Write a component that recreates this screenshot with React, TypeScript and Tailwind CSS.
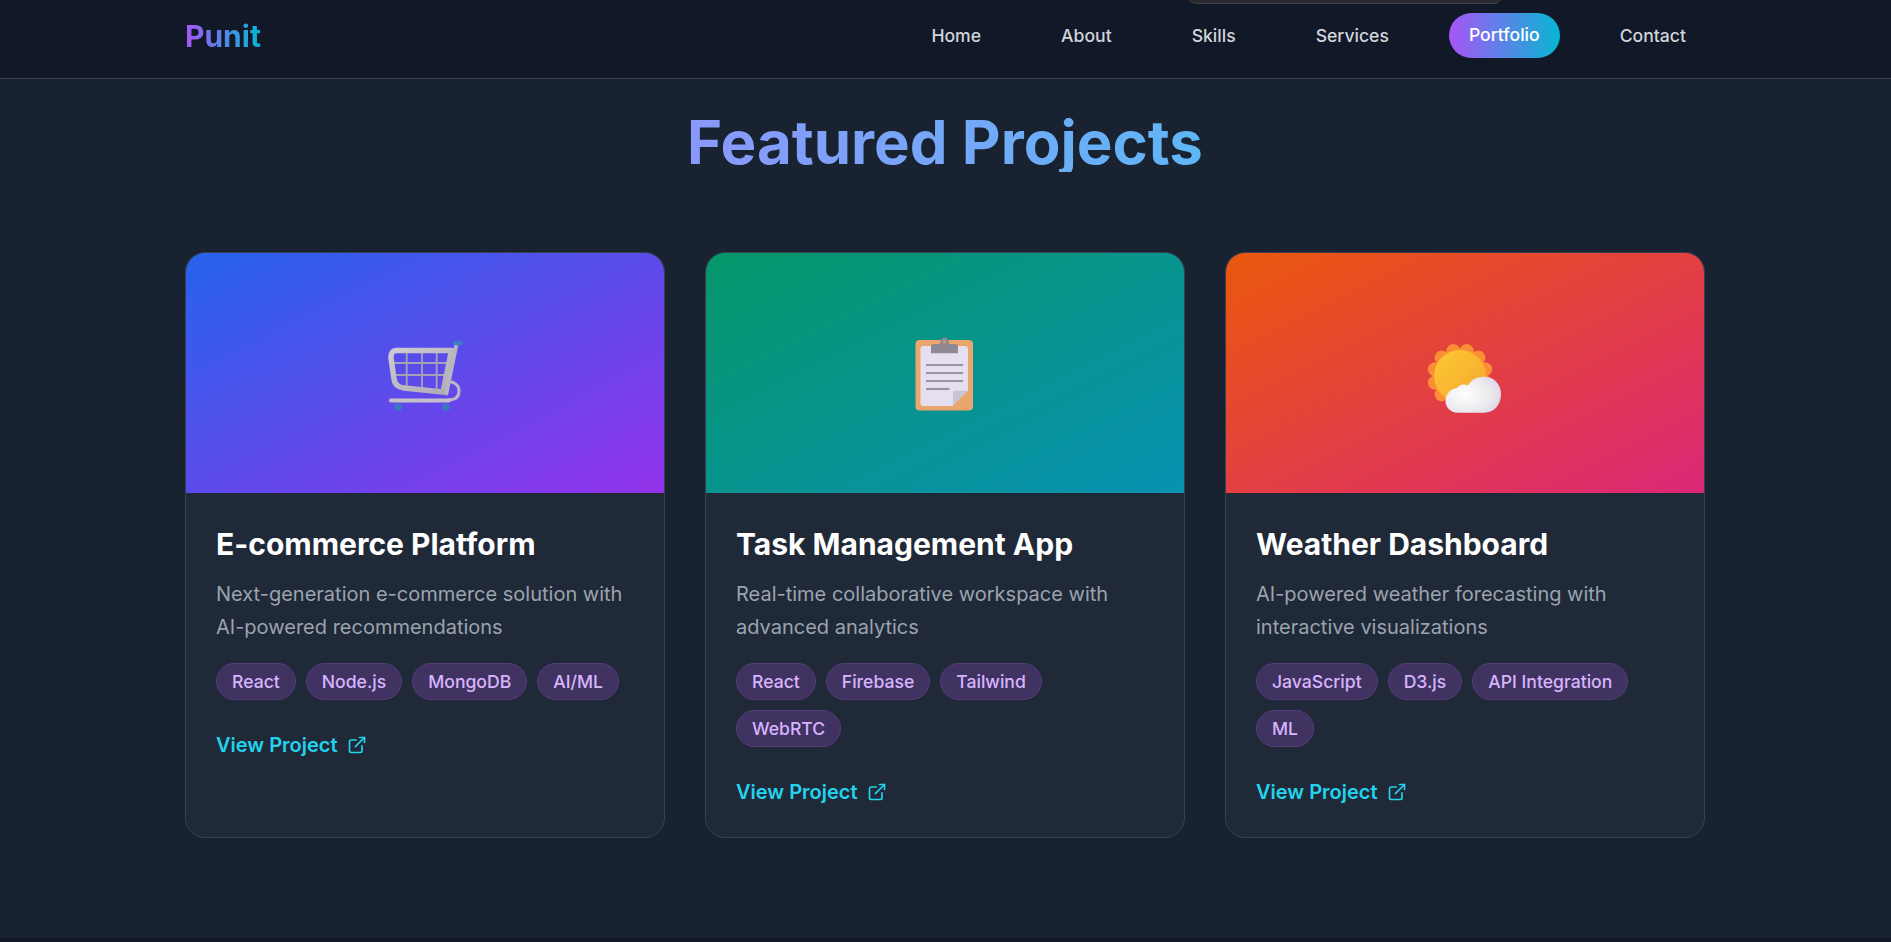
import { ExternalLink } from 'lucide-react';

const NAV_ITEMS = ['Home', 'About', 'Skills', 'Services', 'Portfolio', 'Contact'];

function CartIcon() {
  return (
    <svg viewBox="0 0 80 80" className="w-20 h-20">
      <defs>
        <linearGradient id="cartMetal" x1="0" y1="0" x2="1" y2="1">
          <stop offset="0" stopColor="#cfcbd2" />
          <stop offset="1" stopColor="#aeaab6" />
        </linearGradient>
      </defs>
      <g fill="none" stroke="#a6a3b5" strokeWidth="1.800">
        <path d="M6 30H66" />
        <path d="M7 42H63" />
        <path d="M21.700 15V56" />
        <path d="M37 15V58" />
        <path d="M51.700 15V60" />
      </g>
      <path d="M62 49C69 48 74 52 74 58C74 64 70 67 63 67" fill="none" stroke="#bdb8c2" strokeWidth="3" />
      <path d="M12 17.500H66.500L58 59L19 55Q10 54 9 46L6 25Q5.500 17.500 12 17.500Z" fill="none" stroke="url(#cartMetal)" strokeWidth="5.500" strokeLinejoin="round" />
      <path d="M71.500 11L61 62" fill="none" stroke="#b9b5be" strokeWidth="4" />
      <path d="M6 67.500H64" fill="none" stroke="#c6bfc9" strokeWidth="4" strokeLinecap="round" />
      <ellipse cx="73" cy="10" rx="5" ry="2.500" fill="#3a7fc0" />
      <circle cx="13.300" cy="74.300" r="3.700" fill="#3b78c4" />
      <circle cx="61" cy="74.300" r="3.700" fill="#3b78c4" />
    </svg>
  );
}

function ClipboardIcon() {
  return (
    <svg viewBox="0 0 80 80" className="w-20 h-20">
      <rect x="10.500" y="7" width="57.500" height="70.500" rx="4" fill="#eaa66c" />
      <path d="M18.500 13H60Q63 13 63 16V57.700L48 73H18.500Q15.500 73 15.500 70V16Q15.500 13 18.500 13Z" fill="#e5dfef" />
      <path d="M29 11H35Q35.500 4.300 39.500 4.300Q43.500 4.300 44 11H50Q53 11 53 14V20.300H26V14Q26 11 29 11Z" fill="#8e8892" />
      <circle cx="39.500" cy="9" r="1.700" fill="#c69e84" />
      <g stroke="#97939f" strokeWidth="2.200">
        <path d="M21 32H58" />
        <path d="M21 40H58" />
        <path d="M21 48H58" />
        <path d="M21 56H44.500" />
      </g>
      <path d="M48 73V60.700Q48 57.700 51 57.700H63Z" fill="#cac5d3" />
      <path d="M48 73L63 57.700V73Z" fill="#eaa66c" />
    </svg>
  );
}

const SUN_PETALS = Array.from({ length: 12 }, (_, i) => i * 30);

function WeatherIcon() {
  return (
    <svg viewBox="0 0 80 80" className="w-20 h-20">
      <defs>
        <radialGradient id="cloudShade" cx="0.35" cy="0.5" r="0.75">
          <stop offset="0" stopColor="#ffffff" />
          <stop offset="0.65" stopColor="#eae8ec" />
          <stop offset="1" stopColor="#d6d2e8" />
        </radialGradient>
        <linearGradient id="sunFill" x1="0" y1="0" x2="1" y2="1">
          <stop offset="0" stopColor="#fdca35" />
          <stop offset="1" stopColor="#f3a62b" />
        </linearGradient>
      </defs>
      <g fill="#f98e35">
        <circle cx="35" cy="43" r="28" />
        {SUN_PETALS.map((deg) => (
          <circle
            key={deg}
            cx={35 + 26 * Math.cos(((deg + 15) * Math.PI) / 180)}
            cy={43 + 26 * Math.sin(((deg + 15) * Math.PI) / 180)}
            r="7"
          />
        ))}
      </g>
      <circle cx="35" cy="43" r="26" fill="url(#sunFill)" />
      <path d="M33 79.700C25 79.700 20.500 74 20.500 68C20.500 61 26 55.500 32 55C34 51.500 39 50.500 43 52.500C46 46.500 52 43.700 59 43.700C69 43.700 76 51 76 61C76 72 69 79.700 59 79.700Z" fill="url(#cloudShade)" />
    </svg>
  );
}

const PROJECTS = [
  {
    title: 'E-commerce Platform',
    lines: 'Next-generation e-commerce solution with AI-powered recommendations',
    tags: ['React', 'Node.js', 'MongoDB', 'AI/ML'],
    banner: 'bg-[linear-gradient(to_bottom_right,#2563eb,#9333ea)]',
    icon: <CartIcon />,
  },
  {
    title: 'Task Management App',
    lines: 'Real-time collaborative workspace with advanced analytics',
    tags: ['React', 'Firebase', 'Tailwind', 'WebRTC'],
    banner: 'bg-[linear-gradient(to_bottom_right,#059669,#0891b2)]',
    icon: <ClipboardIcon />,
  },
  {
    title: 'Weather Dashboard',
    lines: 'AI-powered weather forecasting with interactive visualizations',
    tags: ['JavaScript', 'D3.js', 'API Integration', 'ML'],
    banner: 'bg-[linear-gradient(to_bottom_right,#ea580c,#db2777)]',
    icon: <WeatherIcon />,
  },
];

export default function App() {
  return (
    <div className="relative h-[942px] overflow-hidden bg-[#182230] font-['Inter',sans-serif]">
      {/* Nav */}
      <header className="h-[79px] pb-[6px] border-b border-[#374151] bg-[#111827]">
        <div className="w-[1521px] ml-[185px] h-full flex items-center justify-between">
          <span className="text-[30px] font-bold bg-[linear-gradient(90deg,#a855f7,#06b6d4)] bg-clip-text text-transparent">Punit</span>
          <nav className="flex items-center gap-10">
            {NAV_ITEMS.map((item) =>
              item === 'Portfolio' ? (
                <span key={item} className="px-5 h-[45px] -mt-[1px] flex items-center rounded-[25px] text-[17.6px] text-white font-medium bg-[linear-gradient(90deg,#a855f7,#06b6d4)]">
                  {item}
                </span>
              ) : (
                <span key={item} className="px-5 h-[45px] flex items-center text-[17.6px] text-[#d1d5db] font-medium">
                  {item}
                </span>
              ),
            )}
          </nav>
        </div>
      </header>

      {/* Tooltip peeking over the top edge */}
      <div className="absolute left-[1188px] top-[-20px] w-[314px] h-[24px] rounded-[8px] bg-[#2a2a30] border border-[#3f3f46]" />

      <main className="w-[1520px] ml-[185px]">
        <h2 className="mt-[33px] text-center text-[60px] leading-[60px] font-bold bg-[linear-gradient(90deg,#8a98fb,#5fb6f5)] bg-clip-text text-transparent w-fit mx-auto">
          Featured Projects
        </h2>

        <div className="mt-[80px] grid grid-cols-3 gap-10">
          {PROJECTS.map((project) => (
            <article key={project.title} className="h-[586px] rounded-[20px] overflow-hidden border border-[#374151] bg-[#1f2937]">
              <div className={`h-[240px] flex items-center justify-center ${project.banner}`}>{project.icon}</div>
              <div className="p-[30px]">
                <h3 className="text-[30px] leading-[42px] font-bold text-white">{project.title}</h3>
                <p className="mt-[13px] text-[20px] leading-[33px] text-[#9ca3af]">{project.lines}</p>
                <div className="mt-[19px] flex flex-wrap gap-[10px]">
                  {project.tags.map((tag) => (
                    <span key={tag} className="h-[37px] pt-[1px] px-[15px] flex items-center rounded-[20px] border border-[#553c7b] bg-[#403361] text-[17.6px] text-[#d8b4fe] font-medium">
                      {tag}
                    </span>
                  ))}
                </div>
                <a className="mt-[30px] h-[30px] flex items-center gap-[10px] text-[20px] font-semibold text-[#22d3ee]">
                  View Project
                  <ExternalLink className="w-5 h-5" />
                </a>
              </div>
            </article>
          ))}
        </div>
      </main>

      {/* Top edge of the next section */}
      <div className="absolute left-0 right-0 bottom-0 h-[4px] bg-[#111827]" />
    </div>
  );
}
